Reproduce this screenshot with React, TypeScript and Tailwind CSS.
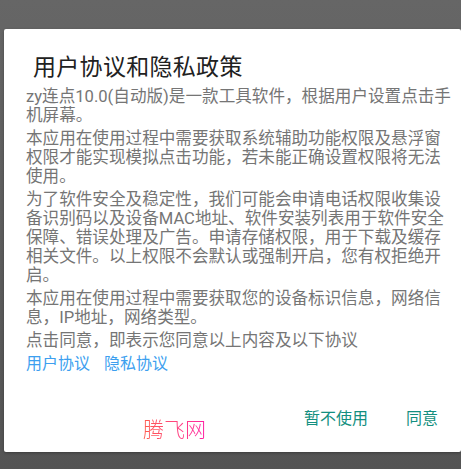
const font = { fontFamily: 'Roboto, "Noto Sans CJK SC", sans-serif' };

const paragraphs: string[][] = [
  ['zy连点10.0(自动版)是一款工具软件，根据用户设置点击手', '机屏幕。'],
  ['本应用在使用过程中需要获取系统辅助功能权限及悬浮窗', '权限才能实现模拟点击功能，若未能正确设置权限将无法', '使用。'],
  [
    '为了软件安全及稳定性，我们可能会申请电话权限收集设',
    '备识别码以及设备MAC地址、软件安装列表用于软件安全',
    '保障、错误处理及广告。申请存储权限，用于下载及缓存',
    '相关文件。以上权限不会默认或强制开启，您有权拒绝开',
    '启。',
  ],
  ['本应用在使用过程中需要获取您的设备标识信息，网络信', '息，IP地址，网络类型。'],
  ['点击同意，即表示您同意以上内容及以下协议'],
];

export default function App() {
  return (
    <div
      className="w-[461px] h-[469px] overflow-hidden bg-gradient-to-b from-[#666666] to-[#545454] pt-[29px] pl-[4px]"
      style={font}
    >
      <div className="relative w-[457px] h-[423px] bg-white rounded-[2px] shadow-[0_1px_3px_rgba(0,0,0,0.3)] flex flex-col">
        <h1 className="pl-[29px] pt-[24px] text-[23px] leading-[30px] text-[#212121] font-normal tracking-[0.3px]">
          用户协议和隐私政策
        </h1>
        <div className="pl-[22px] mt-[4px] flex flex-col gap-[4px] text-[16.6px] leading-[19px] text-[#757575] whitespace-nowrap">
          {paragraphs.map((lines, i) => (
            <p key={i}>
              {lines.map((line, j) => (
                <span key={j} className="block">
                  {line}
                </span>
              ))}
            </p>
          ))}
          <div className="flex gap-[14px] text-[16px] leading-[20px] text-[#3d9fef]">
            <span>用户协议</span>
            <span>隐私协议</span>
          </div>
        </div>
        <div className="mt-[27px] flex justify-end items-center h-[36px] pr-[23px] gap-[38px] text-[16px] text-[#138f80]">
          <span>暂不使用</span>
          <span>同意</span>
        </div>
        <span className="absolute left-[139px] top-[387px] text-[21px] leading-[28px] font-light bg-gradient-to-r from-[#ff5a4a] to-[#ff1aa3] bg-clip-text text-transparent">
          腾飞网
        </span>
      </div>
    </div>
  );
}
